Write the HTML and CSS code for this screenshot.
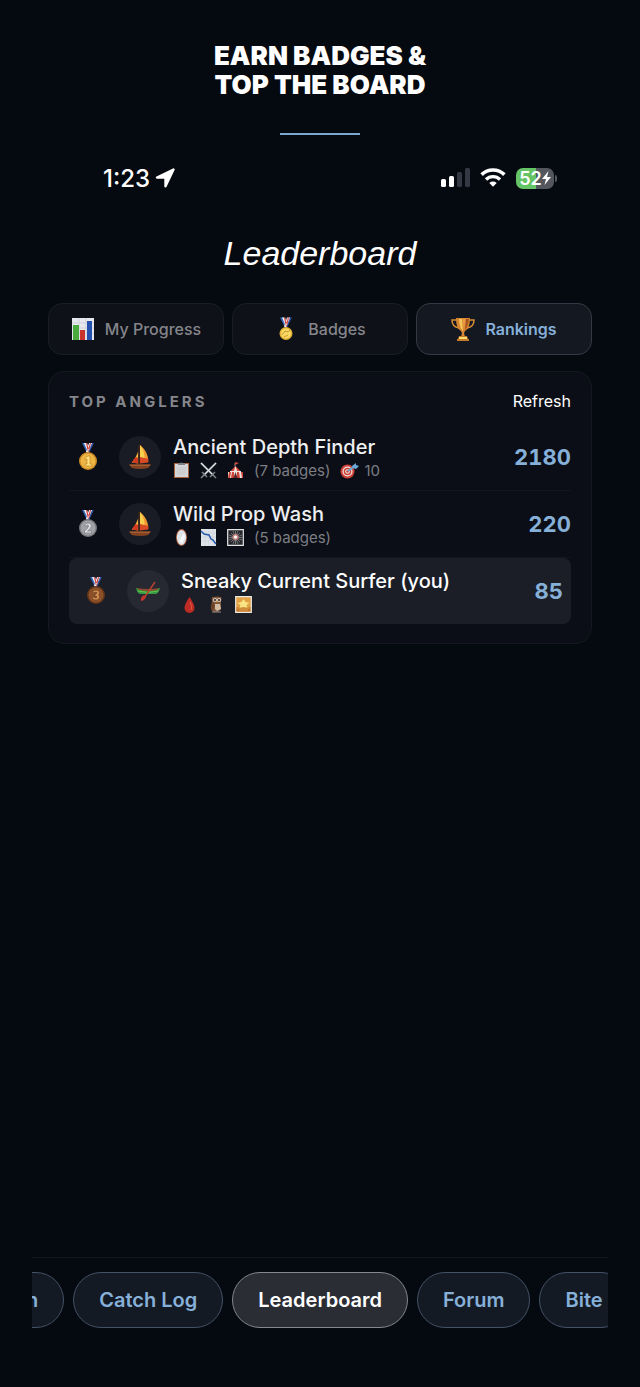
FILE: index.html
```html
<!DOCTYPE html>
<html lang="en">
<head>
<meta charset="UTF-8">
<meta name="viewport" content="width=device-width, initial-scale=1.0">
<title>Leaderboard</title>
<link rel="stylesheet" href="styles.css">
</head>
<body>

<!-- shared icons -->
<svg class="sprite" aria-hidden="true">
  <symbol id="ribbon" viewBox="0 0 20 10">
    <path d="M4 0h4l4 8-3 2z" fill="#3267b8"/>
    <path d="M6 0h3l3 7-2 2z" fill="#f3f3f5"/>
    <path d="M16 0h-4L9 8l2 2z" fill="#2e4f9d"/>
    <path d="M14 0h-3L8 9l2 1z" fill="#f3f3f5"/>
    <path d="M8 0h1l2 7-1 2zM13 0h-1L10 7l1 1z" fill="#d33a35"/>
  </symbol>
  <symbol id="sailboat" viewBox="0 0 24 28">
    <path d="M12 1c6 5 9 11 9 18l-9 1z" fill="#f09a32"/>
    <path d="M12 1c4 5 5 10 5 17l-5 1z" fill="#f8cf4d"/>
    <path d="M12 14l9 2v4l-9 1z" fill="#d94b24"/>
    <path d="M10 8C8 13 6 17 3 20l7 1z" fill="#f2b13c"/>
    <path d="M7 14l3 1v6l-7-1z" fill="#cf3a20"/>
    <path d="M11 1v21" stroke="#5b2c14" stroke-width="1"/>
    <path d="M0 22h24l-3 4q-9 2-18 0z" fill="#844222"/>
    <path d="M1 23h22" stroke="#b06a3a" stroke-width="1"/>
  </symbol>
</svg>

<header class="promo">
  <h1>EARN BADGES &amp;<br>TOP THE BOARD</h1>
  <div class="promo-line"></div>
</header>

<main class="phone">
  <div class="status-bar">
    <div class="status-left">
      <span class="time">1:23</span>
      <svg width="20" height="20" viewBox="0 0 20 20"><path d="M18.500 1.500 2 9.500h8.500v8.700z" fill="#fff" stroke="#fff" stroke-width="2.400" stroke-linejoin="round"/></svg>
    </div>
    <div class="status-right">
      <svg width="29" height="20" viewBox="0 0 29 20">
        <rect x="0" y="11" width="5" height="8" rx="1.500" fill="#fff"/>
        <rect x="8" y="8" width="5" height="11" rx="1.500" fill="#fff"/>
        <rect x="16" y="4" width="5" height="15" rx="1.500" fill="#343843"/>
        <rect x="24" y="0" width="5" height="19" rx="1.500" fill="#343843"/>
      </svg>
      <svg width="26" height="20" viewBox="0 0 26 20">
        <path d="M1.600 6.600a16.300 16.300 0 0 1 22.800 0" fill="none" stroke="#fff" stroke-width="3.600"/>
        <path d="M6 11.500a10 10 0 0 1 14 0" fill="none" stroke="#fff" stroke-width="3.400"/>
        <path d="M9.300 15a5.400 5.400 0 0 1 7.400 0L13 18.800z" fill="#fff"/>
      </svg>
      <div class="battery">
        <span>52</span>
        <svg width="9" height="14" viewBox="0 0 9 14"><path d="M6.500 0 0 8h4L2.500 14 9 6H5z" fill="#fff"/></svg>
      </div>
    </div>
  </div>

  <h2 class="title">Leaderboard</h2>

  <div class="tabs">
    <button type="button" class="tab">
      <svg width="24" height="24" viewBox="0 0 24 24">
        <path d="M1 1h22v22H1z" fill="#e6e8ed"/>
        <path d="M1 6h22M1 11h22M1 16h22M8 1v22M15 1v22" stroke="#cdd1da" stroke-width="1"/>
        <path d="M2 8h6v15H2z" fill="#4aaa3c"/>
        <path d="M9 13h5v10H9z" fill="#c8342c"/>
        <path d="M16 4h5v19h-5z" fill="#2450ae"/>
      </svg>
      My Progress
    </button>
    <button type="button" class="tab">
      <svg width="24" height="24" viewBox="0 0 24 24">
        <use href="#ribbon" x="2" y="0" width="20" height="11"/>
        <circle cx="12" cy="16.500" r="6.500" fill="#e3af35"/>
        <circle cx="12" cy="16.500" r="5" fill="#f7d964"/>
        <path d="M8 18l3-4 3 1 2-2M10 20l4-2" stroke="#c9962f" fill="none"/>
      </svg>
      Badges
    </button>
    <button type="button" class="tab active">
      <svg width="24" height="24" viewBox="0 0 24 24">
        <path d="M6 3H1q0 7 7 8M18 3h5q0 7-7 8" fill="none" stroke="#d99035" stroke-width="1.500"/>
        <path d="M5 1h14q0 11-5 13l-1 2 1 4h-4l1-4-1-2Q5 12 5 1z" fill="#d98632"/>
        <path d="M8 2h3l1 12q-3-2-4-12z" fill="#f7c65b"/>
        <path d="M15 2h3q-1 8-4 11z" fill="#a8551e"/>
        <path d="M12 2h2l-1 11z" fill="#f0a44b"/>
        <path d="M8 19h8l1 3h1v2H6v-2h1z" fill="#c57b27"/>
        <path d="M8 20h8v2H8z" fill="#fbdc73"/>
      </svg>
      Rankings
    </button>
  </div>

  <section class="card">
    <div class="card-head">
      <h3>TOP ANGLERS</h3>
      <button type="button" class="refresh">Refresh</button>
    </div>

    <ol class="ranks">
      <li class="row">
        <div class="medal">
          <svg width="20" height="28" viewBox="0 0 20 28">
            <use href="#ribbon" x="0" y="0" width="20" height="10"/>
            <circle cx="10" cy="18" r="9" fill="#cc8b24"/>
            <circle cx="10" cy="18" r="7.500" fill="#edb544"/>
            <path d="M7 15l3-2h2v8h2v2H7v-2h2v-5l-2 1z" fill="#ffdf7e" stroke="#b97a20" stroke-width=".6"/>
          </svg>
        </div>
        <div class="avatar"><svg width="22" height="26"><use href="#sailboat"/></svg></div>
        <div class="info">
          <div class="name">Ancient Depth Finder</div>
          <div class="meta">
            <svg width="17" height="17" viewBox="0 0 17 17">
              <path d="M1 1h15v15H1z" fill="#a9613c"/>
              <path d="M2 2h13v13H2z" fill="#d4d5d8"/>
              <path d="M4 6h9M4 8h9M4 10h9M4 12h8" stroke="#bfc1c5" stroke-width=".6"/>
              <path d="M5 1h2q1-1 3 0h2v2H5z" fill="#7f8186"/>
            </svg>
            <svg width="17" height="17" viewBox="0 0 17 17">
              <path d="M1 1l12 12M16 1L4 13" stroke="#596168" stroke-width="2.400"/>
              <path d="M1 1l12 12M16 1L4 13" stroke="#e0e4e7" stroke-width="1.200"/>
              <path d="M2 10l5 5M15 10l-5 5M4 13l-3 3M13 13l3 3" stroke="#7d858a" stroke-width="1.500"/>
            </svg>
            <svg width="17" height="17" viewBox="0 0 17 17">
              <path d="M8 5V1" stroke="#999" stroke-width=".8"/><path d="M8 0l4 1-4 2z" fill="#d34b40"/>
              <path d="M8.500 4l5 5h-10z" fill="#d4463e"/><path d="M8.500 4l1.500 5H7z" fill="#f2e8df"/>
              <path d="M3 9h11v2H3zM1 10h15v6H1z" fill="#eee5df"/>
              <path d="M2 10h2l-1 6H1zM5 10h2v6H4zM10 10h2l1 6h-3zM14 10h2v6h-1z" fill="#cf433b"/>
              <path d="M8.500 10l2 6h-4z" fill="#542522"/>
            </svg>
            <span>(7 badges)</span>
            <span class="hits">
              <svg width="19" height="18" viewBox="0 0 19 18">
                <circle cx="7.500" cy="10.500" r="7" fill="#cf4037"/>
                <circle cx="7.500" cy="10.500" r="5" fill="#f0e7e4"/>
                <circle cx="7.500" cy="10.500" r="3.800" fill="#cf4037"/>
                <circle cx="7.500" cy="10.500" r="2.300" fill="#f0e7e4"/>
                <circle cx="7.500" cy="10.500" r="1.200" fill="#cf4037"/>
                <path d="M8 10l7-5" stroke="#65a2cc" stroke-width="2"/>
                <path d="M12 5l4-3v2l3 1-3 3-3-1z" fill="#68a9d7"/>
              </svg>
              10
            </span>
          </div>
        </div>
        <div class="score">2180</div>
      </li>

      <li class="row">
        <div class="medal">
          <svg width="20" height="28" viewBox="0 0 20 28">
            <use href="#ribbon" x="0" y="0" width="20" height="10"/>
            <circle cx="10" cy="18" r="9" fill="#77797d"/>
            <circle cx="10" cy="18" r="7.500" fill="#a0a2a6"/>
            <path d="M6.500 16q0-3 3.500-3t3.500 3q0 2-4 5h4v2h-7v-2q4-3 4-5 0-1-1-1-1 0-1 1z" fill="#dddfe2" stroke="#696b70" stroke-width=".6"/>
          </svg>
        </div>
        <div class="avatar"><svg width="22" height="26"><use href="#sailboat"/></svg></div>
        <div class="info">
          <div class="name">Wild Prop Wash</div>
          <div class="meta">
            <svg width="17" height="17" viewBox="0 0 17 17">
              <ellipse cx="8.500" cy="8.500" rx="5.500" ry="8.500" fill="#ac5a39"/>
              <ellipse cx="8.500" cy="8.500" rx="4.700" ry="7.500" fill="#dce2e6"/>
              <path d="M6 12l5-8 1 4-3 7z" fill="#f5f7f8"/>
            </svg>
            <svg width="17" height="17" viewBox="0 0 17 17">
              <path d="M1 0h15v17H1z" fill="#dfe4e9"/>
              <path d="M1 4h15M1 8h15M1 12h15M5 0v17M9 0v17M13 0v17" stroke="#c6cdd5" stroke-width=".6"/>
              <path d="M1 2l3 3 5 1 2 4 2 1 3 4" stroke="#2858aa" stroke-width="1.500" fill="none"/>
            </svg>
            <svg width="17" height="17" viewBox="0 0 17 17">
              <path d="M.7.700h15.600v15.600H.7z" fill="#26282d" stroke="#e5e5e7" stroke-width="1.200"/>
              <path d="M8.500 2v13M2 8.500h13M4 4l9 9M13 4l-9 9M6 2l5 13M11 2L6 15M2 6l13 5M2 11l13-5" stroke="#a29d9e" stroke-width=".6"/>
              <circle cx="8.500" cy="8" r="3" fill="#c98580"/><circle cx="8.500" cy="8" r="1.600" fill="#fff"/>
            </svg>
            <span>(5 badges)</span>
          </div>
        </div>
        <div class="score">220</div>
      </li>

      <li class="row you">
        <div class="medal">
          <svg width="20" height="28" viewBox="0 0 20 28">
            <use href="#ribbon" x="0" y="0" width="20" height="10"/>
            <circle cx="10" cy="18" r="9" fill="#653619"/>
            <circle cx="10" cy="18" r="7.500" fill="#8d5129"/>
            <path d="M6.500 15q1-2 3.500-2 3.500 0 3.500 3 0 1-1 2 1 1 1 2 0 3-3.500 3-3 0-4-2l2-1q1 1 2 1 1 0 1-1 0-1-2-1v-2q2 0 2-1t-1-1q-1 0-2 1z" fill="#d89455" stroke="#57301a" stroke-width=".5"/>
          </svg>
        </div>
        <div class="avatar">
          <svg width="26" height="20" viewBox="0 0 26 20">
            <path d="M1 7q12 4 24 0-1 5-4 6H5Q2 12 1 7z" fill="#359a43"/>
            <path d="M2 7q11 2 22 0l-2 2q-9 2-18 0z" fill="#8b482b"/>
            <path d="M3 10q10 3 20 0" stroke="#67c04a" stroke-width="1" fill="none"/>
            <path d="M20 1L9 17" stroke="#b9432d" stroke-width="1.500"/>
            <path d="M9 14l2 2q-2 4-5 4-1-4 3-6z" fill="#c3342c"/>
          </svg>
        </div>
        <div class="info">
          <div class="name">Sneaky Current Surfer (you)</div>
          <div class="meta">
            <svg width="17" height="17" viewBox="0 0 17 17">
              <path d="M8.500 1q5 7 5 11a5 5 0 0 1-10 0q0-4 5-11z" fill="#bd2b25"/>
              <path d="M9 6q3 5 1 8" stroke="#e15a48" fill="none"/>
            </svg>
            <svg width="17" height="17" viewBox="0 0 17 17">
              <path d="M4 5Q3 1 5 1q4-1 8 0 1 1 0 5v7l-3 3H5L3 12z" fill="#80553b"/>
              <path d="M7 8h5l1 5-4 2-2-2z" fill="#d1bba3"/>
              <path d="M5 6q-4 5-1 9l3-5z" fill="#6b4029"/>
              <circle cx="7" cy="4" r="2" fill="#dcd0c4"/><circle cx="11" cy="4" r="2" fill="#dcd0c4"/>
              <circle cx="7" cy="4" r="1" fill="#211c19"/><circle cx="11" cy="4" r="1" fill="#211c19"/>
              <path d="M8 5h2l-1 2z" fill="#d99a38"/><path d="M4 16h9" stroke="#8e8d8c"/>
            </svg>
            <svg width="17" height="17" viewBox="0 0 17 17">
              <path d="M.7.700h15.600v15.600H.7z" fill="#e2a145" stroke="#ecece7" stroke-width="1.200"/>
              <path d="M1.500 11h14v4.500h-14z" fill="#c1742d"/>
              <path d="M8.500 3l2 3 4 1-3 2 1 3-4-1-4 1 1-3-3-2 4-1z" fill="#fae584"/>
              <path d="M2 12h13M4 14h9" stroke="#e6ae51" stroke-width=".8"/>
            </svg>
          </div>
        </div>
        <div class="score">85</div>
      </li>
    </ol>
  </section>

  <nav class="bottom-nav">
    <button type="button" class="pill">n</button>
    <button type="button" class="pill">Catch Log</button>
    <button type="button" class="pill current">Leaderboard</button>
    <button type="button" class="pill">Forum</button>
    <button type="button" class="pill">Bite</button>
  </nav>
</main>

</body>
</html>
```
FILE: styles.css
```css
* {
  box-sizing: border-box;
}

body {
  margin: 0;
  min-height: 100vh;
  display: flex;
  flex-direction: column;
  background-color: #050910;
  color: #fff;
  font-family: Inter, "Liberation Sans", sans-serif;
}

h1, h2, h3 {
  margin: 0;
}

button {
  font-family: inherit;
  color: inherit;
  cursor: pointer;
}

svg {
  flex: none;
  display: block;
}

.sprite {
  position: absolute;
  width: 0;
  height: 0;
}

/* Heading above the app */
.promo {
  padding-top: 41px;
  text-align: center;
}

.promo h1 {
  font-size: 26px;
  line-height: 29px;
  font-weight: 900;
}

.promo-line {
  width: 80px;
  height: 2px;
  margin: 34px auto 0;
  background-color: #7ba6cf;
}

.phone {
  flex: 1;
  display: flex;
  flex-direction: column;
  margin: 0 32px;
  padding-top: 23px;
}

/* Status bar */
.status-bar {
  display: flex;
  justify-content: space-between;
  align-items: center;
  height: 40px;
  padding: 0 54px 0 71px;
}

.status-left {
  display: flex;
  align-items: center;
  gap: 5px;
}

.time {
  font-size: 24px;
  font-weight: 500;
}

.status-right {
  display: flex;
  align-items: center;
  gap: 10px;
}

.battery {
  position: relative;
  display: flex;
  align-items: center;
  justify-content: center;
  width: 38px;
  height: 21px;
  border-radius: 7px;
  background: linear-gradient(to right, #65c466 52%, #54565e 52%);
  font-size: 18px;
  font-weight: 600;
}

.battery::after {
  content: "";
  position: absolute;
  left: 39px;
  top: 7px;
  width: 2px;
  height: 7px;
  border-radius: 0 2px 2px 0;
  background-color: #54565e;
}

.title {
  margin: 35px 0 30px;
  font-family: "Liberation Sans", Arial, sans-serif;
  font-size: 34px;
  line-height: 40px;
  font-weight: 400;
  font-style: italic;
  text-align: center;
}

/* Tabs */
.tabs {
  display: grid;
  grid-template-columns: repeat(3, 1fr);
  gap: 8px;
  margin: 0 16px 16px;
}

.tab {
  display: flex;
  align-items: center;
  justify-content: center;
  gap: 10px;
  height: 52px;
  padding: 0;
  border: 1px solid #1a1d26;
  border-radius: 14px;
  background-color: #0e1118;
  color: #85868b;
  font-size: 16px;
  font-weight: 500;
}

.tab.active {
  border-color: #343a45;
  background-color: #131821;
  color: #86b0d8;
  font-weight: 600;
}

/* Leaderboard card */
.card {
  margin: 0 16px;
  padding: 19px 20px;
  border: 1px solid #151820;
  border-radius: 16px;
  background-color: #0b0e16;
}

.card-head {
  display: flex;
  justify-content: space-between;
  align-items: center;
  height: 20px;
  margin-bottom: 13px;
}

.card-head h3 {
  color: #85868b;
  font-size: 15px;
  font-weight: 700;
  letter-spacing: 3px;
}

.refresh {
  padding: 0;
  border: none;
  background: none;
  font-size: 16px;
}

.ranks {
  margin: 0;
  padding: 0;
  list-style: none;
}

.row {
  display: flex;
  align-items: center;
  gap: 12px;
  padding: 10px 0;
  border-bottom: 1px solid #131620;
}

.row.you {
  padding: 10px 8px;
  border-bottom: none;
  border-radius: 8px;
  background-color: #1b1e26;
}

.medal {
  display: flex;
  justify-content: center;
  width: 38px;
}

.avatar {
  display: flex;
  align-items: center;
  justify-content: center;
  width: 42px;
  height: 42px;
  border-radius: 50%;
  background-color: #191c24;
}

.you .avatar {
  background-color: #262931;
}

.info {
  flex: 1;
}

.name {
  color: #eeeff1;
  font-size: 20px;
  line-height: 26px;
  font-weight: 500;
}

.you .name {
  color: #fff;
}

.meta {
  display: flex;
  align-items: center;
  gap: 10px;
  height: 20px;
  color: #7c7e84;
  font-size: 15px;
}

.hits {
  display: flex;
  align-items: center;
  gap: 5px;
}

.score {
  color: #86b0d8;
  font-size: 22px;
  font-weight: 700;
  font-variant-numeric: tabular-nums;
}

/* Bottom navigation */
.bottom-nav {
  display: flex;
  gap: 9px;
  margin-top: auto;
  padding: 14px 0 59px;
  border-top: 1px solid #11151d;
  overflow: hidden;
}

.pill {
  flex: none;
  height: 56px;
  padding: 0 25px;
  border: 1px solid #435266;
  border-radius: 28px;
  background-color: #141a24;
  color: #86b0d8;
  font-size: 20px;
  font-weight: 600;
}

/* the list is scrolled, first item is cut by the edge */
.pill:first-child {
  margin-left: -32px;
}

.pill.current {
  border-color: #85878c;
  background-color: #2b2d35;
  color: #fff;
}
```
